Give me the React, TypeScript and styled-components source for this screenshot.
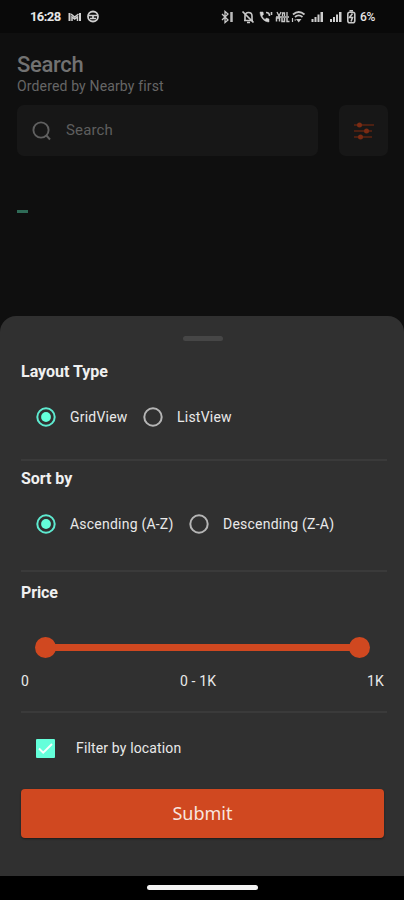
import React from "react";
import styled, { createGlobalStyle } from "styled-components";

const GlobalStyle = createGlobalStyle`
  * { box-sizing: border-box; }
  body { margin: 0; background: #000; font-family: Roboto, "Liberation Sans", sans-serif; }
`;

const Screen = styled.div`
  width: 404px;
  height: 900px;
  display: flex;
  flex-direction: column;
  overflow: hidden;
  background: #0f0f0f;
`;

const StatusBar = styled.header`
  height: 33px;
  flex: none;
  display: flex;
  align-items: center;
  padding: 0 27px 0 30px;
  background: #090909;
  color: #e6e6e6;
`;

const Clock = styled.span`
  width: 38px;
  font-size: 13px;
  font-weight: 700;
  letter-spacing: -0.6px;
  white-space: nowrap;
`;

const StatusLeft = styled.svg`
  width: 34px;
  height: 16px;
`;

const StatusRight = styled.svg`
  width: 136px;
  height: 18px;
  margin-left: auto;
`;

const Battery = styled.span`
  width: 17px;
  margin-left: 3px;
  font-size: 12px;
  font-weight: 500;
  letter-spacing: -0.3px;
`;

const Page = styled.main`
  height: 283px;
  flex: none;
  padding: 19px 16px 0 17px;
`;

const Title = styled.h1`
  margin: 0;
  height: 25px;
  font-size: 22px;
  line-height: 25px;
  font-weight: 500;
  letter-spacing: -0.3px;
  color: #727272;
`;

const Subtitle = styled.p`
  margin: 0;
  height: 18px;
  font-size: 14px;
  line-height: 18px;
  letter-spacing: 0.15px;
  color: #666;
`;

const SearchRow = styled.div`
  display: flex;
  justify-content: space-between;
  margin-top: 10px;
`;

const SearchField = styled.div`
  width: 301px;
  height: 51px;
  display: flex;
  align-items: center;
  gap: 14px;
  padding: 0 0 1px 14px;
  border-radius: 7px;
  background: #171717;
  color: #5e5e5e;
  font-size: 15px;
  letter-spacing: 0.15px;
`;

const SearchIcon = styled.svg`
  width: 21px;
  height: 21px;
`;

const FilterButton = styled.button`
  width: 49px;
  height: 51px;
  display: grid;
  place-items: center;
  padding: 0;
  border: 0;
  border-radius: 7px;
  background: #171717;
`;

const Marker = styled.div`
  width: 11px;
  height: 3px;
  margin-top: 54px;
  background: #2f6b57;
`;

const Backdrop = styled.div`
  flex: none;
  background: #0f0f0f;
`;

const Sheet = styled.section`
  height: 560px;
  display: flex;
  flex-direction: column;
  padding: 20px 20px 0 21px;
  border-radius: 16px 16px 0 0;
  background: #303030;
  color: #e9e9e9;
`;

const Handle = styled.div`
  width: 40px;
  height: 5px;
  flex: none;
  margin-left: 162px;
  border-radius: 3px;
  background: #464646;
`;

const Group = styled.div<{ $height: number; $top: number }>`
  height: ${(p) => p.$height}px;
  flex: none;
  padding-top: ${(p) => p.$top}px;
  margin-right: -3px;
  border-bottom: 2px solid #3a3a3a;
`;

const Heading = styled.h2<{ $tracking: number }>`
  margin: 0;
  height: 20px;
  font-size: 16px;
  line-height: 20px;
  font-weight: 700;
  letter-spacing: ${(p) => p.$tracking}px;
  color: #f0f0f0;
`;

const Options = styled.div`
  display: flex;
  align-items: center;
  height: 20px;
  margin-top: 25px;
  padding-left: 15px;
`;

const Option = styled.label<{ $width?: number }>`
  width: ${(p) => (p.$width ? `${p.$width}px` : "auto")};
  display: flex;
  align-items: center;
  gap: 14px;
  font-size: 14px;
  letter-spacing: 0.22px;
  white-space: nowrap;
`;

const RadioIcon = styled.svg`
  width: 20px;
  height: 20px;
  flex: none;
`;

const Slider = styled.div`
  height: 21px;
  display: flex;
  align-items: center;
  justify-content: space-between;
  margin: 34px 17px 0 14px;
  background: linear-gradient(#d04820, #d04820) center / calc(100% - 10px) 7px no-repeat;
`;

const Knob = styled.span`
  width: 21px;
  height: 21px;
  border-radius: 50%;
  background: #d04820;
`;

const Values = styled.div`
  display: flex;
  justify-content: space-between;
  margin: 13px 3px 0 0;
  font-size: 14px;
  line-height: 20px;
  letter-spacing: 0.15px;
`;

const CheckRow = styled.label`
  display: flex;
  align-items: center;
  gap: 21px;
  height: 20px;
  flex: none;
  margin: 25px 0 0 15px;
  font-size: 14px;
  letter-spacing: 0.15px;
`;

const CheckIcon = styled.svg`
  width: 19px;
  height: 19px;
`;

const Submit = styled.button`
  height: 49px;
  flex: none;
  margin-top: 31px;
  padding: 0 0 2px;
  border: 0;
  border-radius: 4px;
  background: #d04820;
  color: #f8e5df;
  box-shadow: 0 1px 2px rgba(0, 0, 0, 0.45);
  font-family: "Noto Sans", sans-serif;
  font-size: 18px;
`;

const NavBar = styled.footer`
  height: 24px;
  flex: none;
  display: flex;
  justify-content: center;
  padding-top: 9px;
  background: #000;
`;

const NavPill = styled.div`
  width: 111px;
  height: 5px;
  border-radius: 3px;
  background: #f4f4f4;
`;

function Radio({ checked = false }: { checked?: boolean }) {
  return (
    <RadioIcon viewBox="0 0 20 20" fill="none">
      <circle cx="10" cy="10" r="8.700" stroke={checked ? "#5eead0" : "#b5b5b5"} strokeWidth="2" />
      {checked && <circle cx="10" cy="10" r="4.900" fill="#64ffda" />}
    </RadioIcon>
  );
}

function LeftStatusIcons() {
  return (
    <StatusLeft viewBox="0 0 34 16" fill="none" stroke="#cfcfcf">
      <path d="M1.5 4v8M12 4v8" strokeWidth="2" />
      <path d="M3 5l3.7 3L10.500 5M4 12V8l2.700 2L9.500 8v4" strokeWidth="1.500" />
      <circle cx="25" cy="7.500" r="5" strokeWidth="1.800" />
      <path d="M20.500 6.500h9M22 9.500h6M25 6.500v3" strokeWidth="1.700" />
    </StatusLeft>
  );
}

function SignalBars({ x }: { x: number }) {
  return (
    <path
      d={`M${x} 14v-3h2v3zM${x + 3} 14V9h2v5zM${x + 6} 14V6.500h2V14zM${x + 9} 14V4h2.500v10z`}
      fill="#cfcfcf"
      stroke="none"
    />
  );
}

function RightStatusIcons() {
  return (
    <StatusRight viewBox="0 0 136 18" fill="none" stroke="#c8c8c8">
      <path d="M1 6l6 6-3 2.500v-11L7 6l-6 6" strokeWidth="1.300" />
      <path d="M10.500 4v10" strokeWidth="2.500" stroke="#bbb" />
      <path d="M23 12.500h9M24 12V8c0-2 1.200-3.500 3.500-3.500S31 6 31 8v4M26 14.500h3" strokeWidth="1.600" />
      <path d="M21.500 3.500l11 11" strokeWidth="1.700" />
      <path d="M39 4c0 5 4 10 9 10v-3l-2.500-1-1.500 1.500C42.500 10.500 41.500 9 41 8l1.500-1.500L42 4z" fill="#d4d4d4" strokeWidth="0.500" />
      <path d="M45 4.500c2 0 3.500 1.500 3.500 3.500M50.500 4v3" strokeWidth="1.600" />
      <path d="M56 4l2 4 2-4M61.500 8V5h2v3M66 4v4M55 9h13" strokeWidth="1.300" />
      <path d="M55.500 13.500V10h3v3.500M61 10v3.500h2.500V10M66 10v3.500h2.500" strokeWidth="1.500" />
      <path d="M72 6.500c3.500-3 8-3 11.500 0M74 9c2.300-2 5-2 7.500 0" strokeWidth="1.800" />
      <path d="M75 11l2.700 3.500L80.500 11z" fill="#c8c8c8" stroke="none" />
      <path d="M71.500 10v4M73.500 12h1.500" strokeWidth="1.200" />
      <SignalBars x={90.5} />
      <SignalBars x={109} />
      <rect x="126.800" y="4.200" width="7" height="10.500" rx="2" strokeWidth="1.600" />
      <path d="M128.500 2.800h3.500" strokeWidth="1.600" />
      <path d="M131.500 5.500l-3 4h3l-1.500 4" strokeWidth="1.600" />
    </StatusRight>
  );
}

export default function App() {
  return (
    <>
      <GlobalStyle />
      <Screen>
        <StatusBar>
          <Clock>16:28</Clock>
          <LeftStatusIcons />
          <RightStatusIcons />
          <Battery>6%</Battery>
        </StatusBar>
        <Page>
          <Title>Search</Title>
          <Subtitle>Ordered by Nearby first</Subtitle>
          <SearchRow>
            <SearchField>
              <SearchIcon viewBox="0 0 21 21" fill="none" stroke="#606060" strokeWidth="1.900">
                <circle cx="10" cy="10" r="7.600" />
                <path d="M15 15l4 4.500" />
              </SearchIcon>
              Search
            </SearchField>
            <FilterButton aria-label="Filters">
              <svg width="21" height="18" viewBox="0 0 21 18" fill="none" stroke="#5f2412" strokeWidth="1.500">
                <path d="M1 3h20M1 9h18M1 15h18" />
                <g fill="#7b2b13" stroke="none">
                  <circle cx="6.500" cy="3" r="2.500" />
                  <circle cx="13.500" cy="9" r="2.500" />
                  <circle cx="7.500" cy="15" r="2.500" />
                </g>
              </svg>
            </FilterButton>
          </SearchRow>
          <Marker />
        </Page>
        <Backdrop>
          <Sheet>
            <Handle />
            <Group $height={120} $top={21}>
              <Heading $tracking={0}>Layout Type</Heading>
              <Options>
                <Option $width={107}><Radio checked />GridView</Option>
                <Option><Radio />ListView</Option>
              </Options>
            </Group>
            <Group $height={111} $top={8}>
              <Heading $tracking={-0.05}>Sort by</Heading>
              <Options>
                <Option $width={153}><Radio checked />Ascending (A-Z)</Option>
                <Option><Radio />Descending (Z-A)</Option>
              </Options>
            </Group>
            <Group $height={141} $top={11}>
              <Heading $tracking={-0.1}>Price</Heading>
              <Slider><Knob /><Knob /></Slider>
              <Values><span>0</span><span>0 - 1K</span><span>1K</span></Values>
            </Group>
            <CheckRow>
              <CheckIcon viewBox="0 0 19 19" fill="none">
                <rect width="19" height="19" rx="1" fill="#64ffda" />
                <path d="M3 9.500l4.200 4.200L16 5" stroke="#f2fffc" strokeWidth="2" />
              </CheckIcon>
              Filter by location
            </CheckRow>
            <Submit>Submit</Submit>
          </Sheet>
        </Backdrop>
        <NavBar><NavPill /></NavBar>
      </Screen>
    </>
  );
}
